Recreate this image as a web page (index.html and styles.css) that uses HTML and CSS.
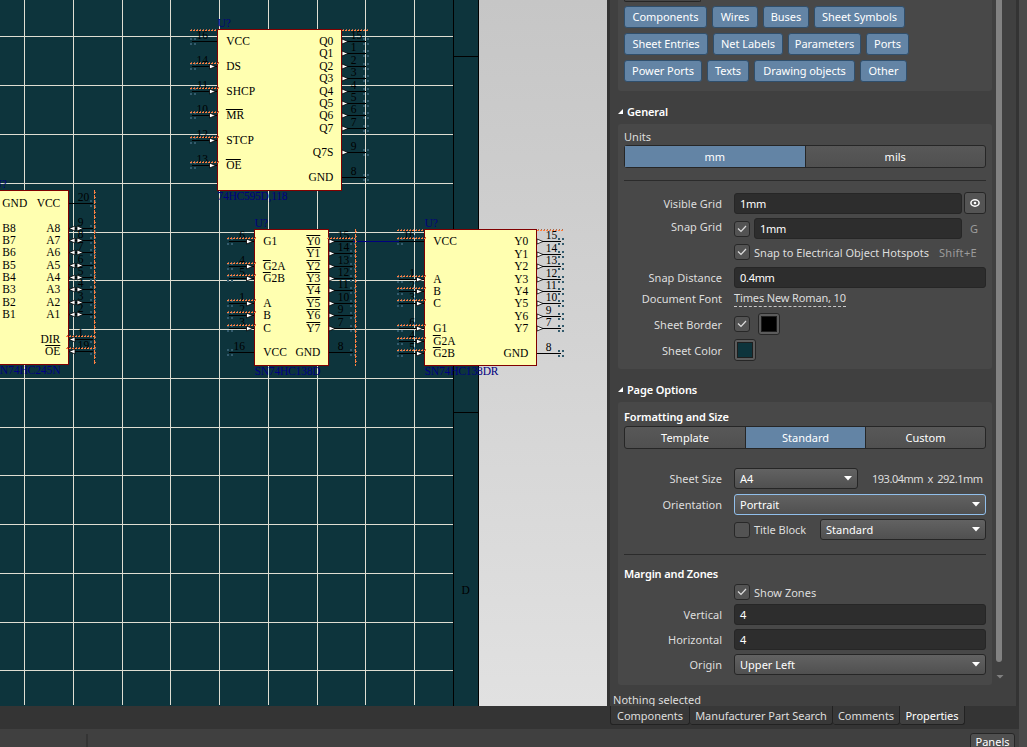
FILE: index.html
```html
<!DOCTYPE html>
<html lang="en">
<head>
<meta charset="utf-8">
<title>Schematic Editor</title>
<link rel="stylesheet" href="styles.css">
</head>
<body>
<div class="app">
  <div class="workspace">
    <svg class="sheet" id="sheet" width="607" height="706" viewBox="0 0 607 706"></svg>
    <aside class="panel">
      <div class="content">
        <section class="box filters">
          <div class="clipped"></div>
          <div class="chips"><span class="chip w83">Components</span><span class="chip w46">Wires</span><span class="chip w46">Buses</span><span class="chip w91">Sheet Symbols</span></div>
          <div class="chips"><span class="chip w84">Sheet Entries</span><span class="chip w70">Net Labels</span><span class="chip w73">Parameters</span><span class="chip w43">Ports</span></div>
          <div class="chips"><span class="chip w78">Power Ports</span><span class="chip w42">Texts</span><span class="chip w101">Drawing objects</span><span class="chip w47">Other</span></div>
        </section>
        <h2 class="title"><svg width="5" height="5"><path d="M5 0V5H0Z" fill="#fff"/></svg>General</h2>
        <section class="box general">
          <div class="units">Units</div>
          <div class="segment"><span class="on">mm</span><span>mils</span></div>
          <hr>
          <div class="row visible"><label>Visible Grid</label><div class="input grow">1mm</div><div class="eye"><svg width="10" height="8" viewBox="0 0 10 8"><ellipse cx="5" cy="4" rx="4.1" ry="3.2" fill="none" stroke="#fff" stroke-width="1.5"/><circle cx="5" cy="4" r="1.3" fill="#fff"/></svg></div></div>
          <div class="row snap"><label class="up">Snap Grid</label><div class="check"><svg width="10" height="8"><path d="M1 3.5L4 6.5L9 1"/></svg></div><div class="input grow">1mm</div><span class="key g">G</span></div>
          <div class="row hotspots"><label></label><div class="check"><svg width="10" height="8"><path d="M1 3.5L4 6.5L9 1"/></svg></div><span class="spots">Snap to Electrical Object Hotspots</span><span class="key">Shift+E</span></div>
          <div class="row distance"><label>Snap Distance</label><div class="input grow">0.4mm</div></div>
          <div class="row font"><label>Document Font</label><span class="link">Times New Roman, 10</span></div>
          <div class="row border"><label>Sheet Border</label><div class="check"><svg width="10" height="8"><path d="M1 3.5L4 6.5L9 1"/></svg></div><div class="swatch black"><i></i></div></div>
          <div class="row color"><label>Sheet Color</label><div class="swatch"><i></i></div></div>
        </section>
        <h2 class="title"><svg width="5" height="5"><path d="M5 0V5H0Z" fill="#fff"/></svg>Page Options</h2>
        <section class="box page">
          <h3>Formatting and Size</h3>
          <div class="segment three"><span>Template</span><span class="on">Standard</span><span>Custom</span></div>
          <div class="row size"><label>Sheet Size</label><div class="select a4">A4<svg width="8" height="5"><path d="M0 0H8L4 4.5Z"/></svg></div><span class="dims">193.04mm x 292.1mm</span></div>
          <div class="row orient"><label>Orientation</label><div class="select grow focus">Portrait<svg width="8" height="5"><path d="M0 0H8L4 4.5Z"/></svg></div></div>
          <div class="row block"><label></label><div class="check"></div><span class="tb">Title Block</span><div class="select grow">Standard<svg width="8" height="5"><path d="M0 0H8L4 4.5Z"/></svg></div></div>
          <hr class="second">
          <h3 class="margins">Margin and Zones</h3>
          <div class="row zones"><label></label><div class="check"><svg width="10" height="8"><path d="M1 3.5L4 6.5L9 1"/></svg></div><span class="show">Show Zones</span></div>
          <div class="row f1"><label>Vertical</label><div class="input grow">4</div></div>
          <div class="row f1"><label>Horizontal</label><div class="input grow">4</div></div>
          <div class="row f1"><label>Origin</label><div class="select grow">Upper Left<svg width="8" height="5"><path d="M0 0H8L4 4.5Z"/></svg></div></div>
        </section>
        <div class="selection">Nothing selected</div>
      </div>
      <div class="scroll"><div class="thumb"></div><svg width="8" height="4"><path d="M0.5 0H7.5L4 3.5Z" fill="#808080"/></svg></div>
    </aside>
  </div>
  <nav class="tabs"><span class="t1">Components</span><span class="t2">Manufacturer Part Search</span><span class="t3">Comments</span><span class="t4 active">Properties</span></nav>
  <footer class="status"><i></i><span class="panels">Panels</span></footer>
</div>
<div class="edge"></div>
<script src="schematic.js"></script>
</body>
</html>
```
FILE: styles.css
```css
* { box-sizing: border-box; }
body { margin: 0; width: 1027px; height: 747px; overflow: hidden; display: flex; background: #404040; color: #dedede; font: 11px/15px "Noto Sans", "Open Sans", sans-serif; letter-spacing: .02px; white-space: nowrap; }
.app { width: 1019px; height: 747px; display: flex; flex-direction: column; }
.edge { width: 8px; background: #4a4a4a; }
.workspace { height: 706px; display: flex; overflow: hidden; }
.sheet { display: block; flex: none; background: linear-gradient(#c6c6c6, #e1e1e1); }
.sheet text { font: 11.5px "Liberation Serif", serif; letter-spacing: 0; fill: #000; }
.sheet .ref { fill: #000080; }
.panel { width: 412px; display: flex; border-left: 3px solid #333; border-right: 3px solid #333; background: #404040; }
.content { width: 382px; padding-left: 8px; }
.box { width: 374px; background: #484848; border-radius: 3px; padding: 0 6px; }
.filters { height: 91px; border-radius: 0 0 3px 3px; display: flex; flex-direction: column; gap: 5px; }
.clipped { width: 77px; height: 2px; border: solid #262626; border-width: 0 1px 1px; border-radius: 0 0 3px 3px; margin-bottom: -1px; }
.chips { display: flex; gap: 5px; height: 22px; }
.chip { height: 22px; border: 1px solid #304f6c; border-radius: 3px; background: #6384a5; color: #fff; text-align: center; line-height: 20px; letter-spacing: -.05px; }
.w83 { width: 83px; } .w46 { width: 46px; } .w91 { width: 91px; } .w84 { width: 84px; } .w70 { width: 70px; } .w73 { width: 73px; } .w43 { width: 43px; } .w78 { width: 78px; } .w42 { width: 42px; } .w101 { width: 101px; } .w47 { width: 47px; }
h2, h3 { margin: 0; font-size: 11px; font-weight: 600; line-height: 15px; color: #fff; letter-spacing: -.14px; }
.title { height: 33px; padding: 13px 0 0; display: flex; gap: 4px; }
.title svg { margin-top: 5px; }
.general { height: 245px; padding-top: 5px; }
.units { height: 16px; }
.segment { height: 23px; width: 362px; display: flex; border: 1px solid #262626; border-radius: 3px; background: linear-gradient(#585858, #505050); }
.segment span { flex: 1; text-align: center; line-height: 21px; color: #fff; }
.segment span + span { border-left: 1px solid #262626; }
.segment .on { background: #6384a5; }
.three span:first-child { flex: 0 0 120px; }
hr { margin: 12px 0 0; border: 0; height: 1px; background: #2b2b2b; }
.row { width: 362px; display: flex; align-items: center; height: 21px; }
label { width: 98px; margin-right: 12px; text-align: right; flex: none; }
.input, .select { height: 21px; border: 1px solid #262626; border-radius: 3px; padding-left: 5px; line-height: 19px; color: #fff; }
.input { background: #2d2d2d; letter-spacing: -.3px; }
.grow { flex: 1; }
.select { display: flex; justify-content: space-between; align-items: center; padding-right: 5px; background: linear-gradient(#626262, #505050); }
.select svg { fill: #fff; }
.focus { border-color: #91bfeb; }
.visible { margin-top: 12px; }
.eye { width: 22px; height: 22px; margin: -1px 0 0 2px; border: 1px solid #262626; border-radius: 3px; background: #545454; display: flex; align-items: center; justify-content: center; }
.snap { margin-top: 4px; }
.up { margin-top: -5px; }
.check { width: 16px; height: 16px; border: 1px solid #282828; border-radius: 3px; background: #535353; display: flex; align-items: center; justify-content: center; flex: none; margin-right: 4px; }
.check path { fill: none; stroke: #dedede; stroke-width: 1.2; }
.key { color: #9c9c9c; margin-left: 10px; letter-spacing: .3px; }
.g { width: 16px; margin-left: 8px; }
.hotspots { height: 16px; margin-top: 5px; }
.distance { margin-top: 7px; }
.font { height: 16px; margin-top: 3px; }
.font label { margin-top: -1px; }
.link { height: 16px; line-height: 14px; border-bottom: 1px dashed #c8c8c8; letter-spacing: -.14px; }
.border { height: 22px; margin-top: 6px; }
.swatch { width: 22px; height: 22px; border: 1px solid #262626; border-radius: 3px; background: #5c5c5c; display: flex; align-items: center; justify-content: center; }
.swatch i { width: 16px; height: 16px; background: #0d343c; border: 1px solid #1e1e1e; }
.black { margin-left: 4px; }
.black i { background: #000; }
.color { height: 22px; margin-top: 4px; }
.page { height: 283px; padding-top: 7px; }
.page h3 { height: 17px; }
.size { margin-top: 19px; }
.a4 { width: 124px; flex: none; }
.dims { margin-left: 14px; word-spacing: 2px; letter-spacing: -.48px; }
.orient { margin-top: 5px; }
.block { margin-top: 4px; }
.tb { width: 66px; letter-spacing: -.05px; }
.second { margin-top: 14px; }
.page .margins { height: 18px; margin-top: 11px; }
.zones { height: 16px; }
.f1 { margin-top: 4px; }
.selection { margin: 8px 0 0 -5px; height: 13px; line-height: 13px; }
.scroll { padding-left: 4px; }
.thumb { width: 6px; height: 662px; background: #828282; border-radius: 0 0 3px 3px; margin-bottom: 13px; }
.scroll svg { display: block; }
.tabs { height: 23px; background: #343434; padding-left: 610px; display: flex; }
.tabs span { height: 19px; text-align: center; line-height: 19px; background: #383838; border: 1px solid #222; border-width: 0 1px 1px 0; border-radius: 0 0 3px 3px; letter-spacing: -.04px; }
.tabs .t1 { width: 80px; border-left-width: 1px; } .t2 { width: 143px; } .t3 { width: 67px; } .t4 { width: 65px; }
.tabs .active { background: #404040; color: #fff; }
.status { height: 18px; display: flex; padding-right: 4px; overflow: hidden; }
.status i { width: 2px; height: 13px; background: #343434; margin: 5px auto 0 86px; }
.panels { width: 45px; height: 22px; margin-top: 4px; border: 1px solid #262626; border-radius: 3px; background: #505050; color: #fff; text-align: center; line-height: 16px; }
```
FILE: schematic.js
```javascript
const out = [];
const add = (s) => out.push(s);
const line = (x1, y1, x2, y2, c, extra = '') => add(`<path d="M${x1} ${y1}L${x2} ${y2}" stroke="${c}" ${extra}/>`);
const snap = (y) => Math.floor(y) + 0.5;
const label = (x, y, s, anchor = 'start', cls = '', w = 0) =>
  add(`<text x="${x}" y="${y}" text-anchor="${anchor}" class="${cls}" ${w ? `textLength="${w}"` : ''}>${s}</text>`);

// Warning squiggle: two rows of offset single-pixel dots
function warn(x1, y, x2) {
  y = snap(y);
  line(x1, y, x2, y, '#ff8040', 'stroke-dasharray="2 1"');
  line(x1 + 1, y - 1, x2, y - 1, '#b06848', 'stroke-dasharray="1 2"');
}
function warnV(x, y1, y2) {
  line(x, y1, x, y2, '#ff8040', 'stroke-dasharray="4 1"');
  line(x + 1, y1 + 2, x + 1, y2, '#c87550', 'stroke-dasharray="1 4"');
}
function dots(x, y) {
  y = Math.floor(y);
  for (const dx of [0, 4]) for (const dy of [-3, 2]) add(`<rect x="${x + dx}" y="${y + dy}" width="2" height="2" fill="#335b6d"/>`);
}
const tri = (x, y, d) => add(`<path d="M${x} ${y - 2.5}L${x + 6 * d} ${y}L${x} ${y + 2.5}Z" fill="#fff" stroke="#000" stroke-width=".8"/>`);

// Sheet, grid, and border zones
add('<rect width="479" height="706" fill="#0d343c"/>');
for (const x of [24, 73, 122, 170, 219, 268, 317, 365, 414]) line(x + .5, 0, x + .5, 705, '#deded2');
for (const y of [36, 85, 134, 183, 232, 280, 329, 378, 427, 475, 524, 573, 622, 670]) line(0, y + .5, 453, y + .5, '#deded2');
line(453.5, 0, 453.5, 706, '#000');
line(478.5, 0, 478.5, 706, '#000');
line(453, 56.5, 478, 56.5, '#000');
line(453, 412.5, 478, 412.5, '#000');
label(461.5, 594, 'D');
line(353, 241.5, 400, 241.5, '#000080');

// Pin: [y, name, number, kind, overline, warning]
function part(p) {
  for (const [y0, , num, kind] of p.left) {
    const y = snap(y0);
    dots(p.x1 - 27, y);
    line(p.x1 - 25, y, p.x1, y, '#000');
    if (kind) tri(p.x1 - 7.5, y, 1);
    if (num) label(p.x1 - 9, y - 2.5, num, 'end');
  }
  for (const [y0, , num, kind] of p.right) {
    const y = snap(y0), x = p.x2;
    dots(x + 22, y);
    line(x, y, x + 25, y, '#000');
    if (kind === 1) tri(x + 1, y, 1);
    if (kind === 2) { tri(x + 7, y, -1); tri(x + 9, y, 1); }
    if (kind === 3) tri(x + 7, y, -1);
    label(x + 9.8, y - 2.5, num);
  }
  add(`<rect x="${p.x1 + .5}" y="${p.y1 + .5}" width="${p.x2 - p.x1}" height="${p.y2 - p.y1}" fill="#ffffb0" stroke="#800000"/>`);
  for (const [list, x, anchor] of [[p.left, p.x1 + 9.3, 'start'], [p.right, p.x2 - 7.7, 'end']]) {
    for (const [y, name, , , bar] of list) {
      label(x, Math.floor(y) + 4.4, name, anchor);
      if (bar) {
        const sx = anchor === 'end' ? x - bar : x - .5;
        line(sx, snap(y) - 6, sx + bar, snap(y) - 6, '#000');
      }
    }
  }
  for (const [y0, , , , , w] of p.left) if (w) warn(p.x1 - 27, y0 - 3, p.x1 + 3);
  label(p.x1 + .5, p.y1 - 2, 'U?', 'start', 'ref');
  label(p.x1 + .5, p.y2 + 10, p.part, 'start', 'ref', p.w);
}

part({
  x1: 217, x2: 341, y1: 29, y2: 190, part: '74HC595D,118', w: 70,
  left: [[41, 'VCC', 16, 0], [66, 'DS', 14, 1, 0, 1], [91, 'SHCP', 11, 1, 0, 1], [115, 'MR', 10, 1, 17, 1], [140, 'STCP', 12, 1, 0, 1], [165, 'OE', 13, 1, 15, 1]],
  right: [[41, 'Q0', 15, 1], [53, 'Q1', 1, 1], [66, 'Q2', 2, 1], [78, 'Q3', 3, 1], [91, 'Q4', 4, 1], [103, 'Q5', 5, 1], [115, 'Q6', 6, 1], [128, 'Q7', 7, 1], [152, 'Q7S', 9, 1], [177, 'GND', 8, 0]]
});
warn(190, 30, 217); warn(342, 30, 369);

part({
  x1: -7, x2: 68, y1: 190, y2: 364, part: 'SN74HC245N', w: 67,
  left: [[203, 'GND', '', 0], [228, 'B8', '', 0], [240, 'B7', '', 0], [252, 'B6', '', 0], [265, 'B5', '', 0], [277, 'B4', '', 0], [289, 'B3', '', 0], [302, 'B2', '', 0], [314, 'B1', '', 0]],
  right: [[203, 'VCC', 20, 0], [228, 'A8', 9, 2], [240, 'A7', 8, 2], [252, 'A6', 7, 2], [265, 'A5', 6, 2], [277, 'A4', 5, 2], [289, 'A3', 4, 2], [302, 'A2', 3, 2], [314, 'A1', 2, 2], [339, 'DIR', 1, 3], [351, 'OE', 19, 3, 15]]
});
warn(66, 336, 95); warn(66, 348, 95); warnV(94.5, 190, 364);

part({
  x1: 254, x2: 328, y1: 229, y2: 365, part: 'SN74HC138D', w: 66,
  left: [[241, 'G1', 6, 1, 0, 1], [266, 'G2A', 4, 1, 8, 1], [278, 'G2B', 5, 1, 8, 1], [303, 'A', 1, 1, 0, 1], [315, 'B', 2, 1, 0, 1], [328, 'C', 3, 1, 0, 1], [352, 'VCC', 16, 0]],
  right: [[241, 'Y0', 15, 1, 14], [253, 'Y1', 14, 1, 14], [266, 'Y2', 13, 1, 14], [278, 'Y3', 12, 1, 14], [290, 'Y4', 11, 1, 14], [303, 'Y5', 10, 1, 14], [315, 'Y6', 9, 1, 14], [328, 'Y7', 7, 1, 14], [352, 'GND', 8, 0]]
});
warn(327, 238, 355); warnV(355.5, 229, 366);

part({
  x1: 424, x2: 536, y1: 229, y2: 365, part: 'SN74HC138DR', w: 74,
  left: [[241, 'VCC', 16, 0, 0, 1], [279, 'A', 1, 1, 0, 1], [291, 'B', 2, 1, 0, 1], [303, 'C', 3, 1, 0, 1], [328, 'G1', 6, 1, 0, 1], [341, 'G2A', 4, 1, 8, 1], [353, 'G2B', 5, 1, 8, 1]],
  right: [[241, 'Y0', 15, 1], [254, 'Y1', 14, 1], [266, 'Y2', 13, 1], [279, 'Y3', 12, 1], [291, 'Y4', 11, 1], [303, 'Y5', 10, 1], [316, 'Y6', 9, 1], [328, 'Y7', 7, 1], [353, 'GND', 8, 0]]
});
warn(397, 230, 424); warn(537, 230, 564);

document.getElementById('sheet').innerHTML = out.join('');
```
